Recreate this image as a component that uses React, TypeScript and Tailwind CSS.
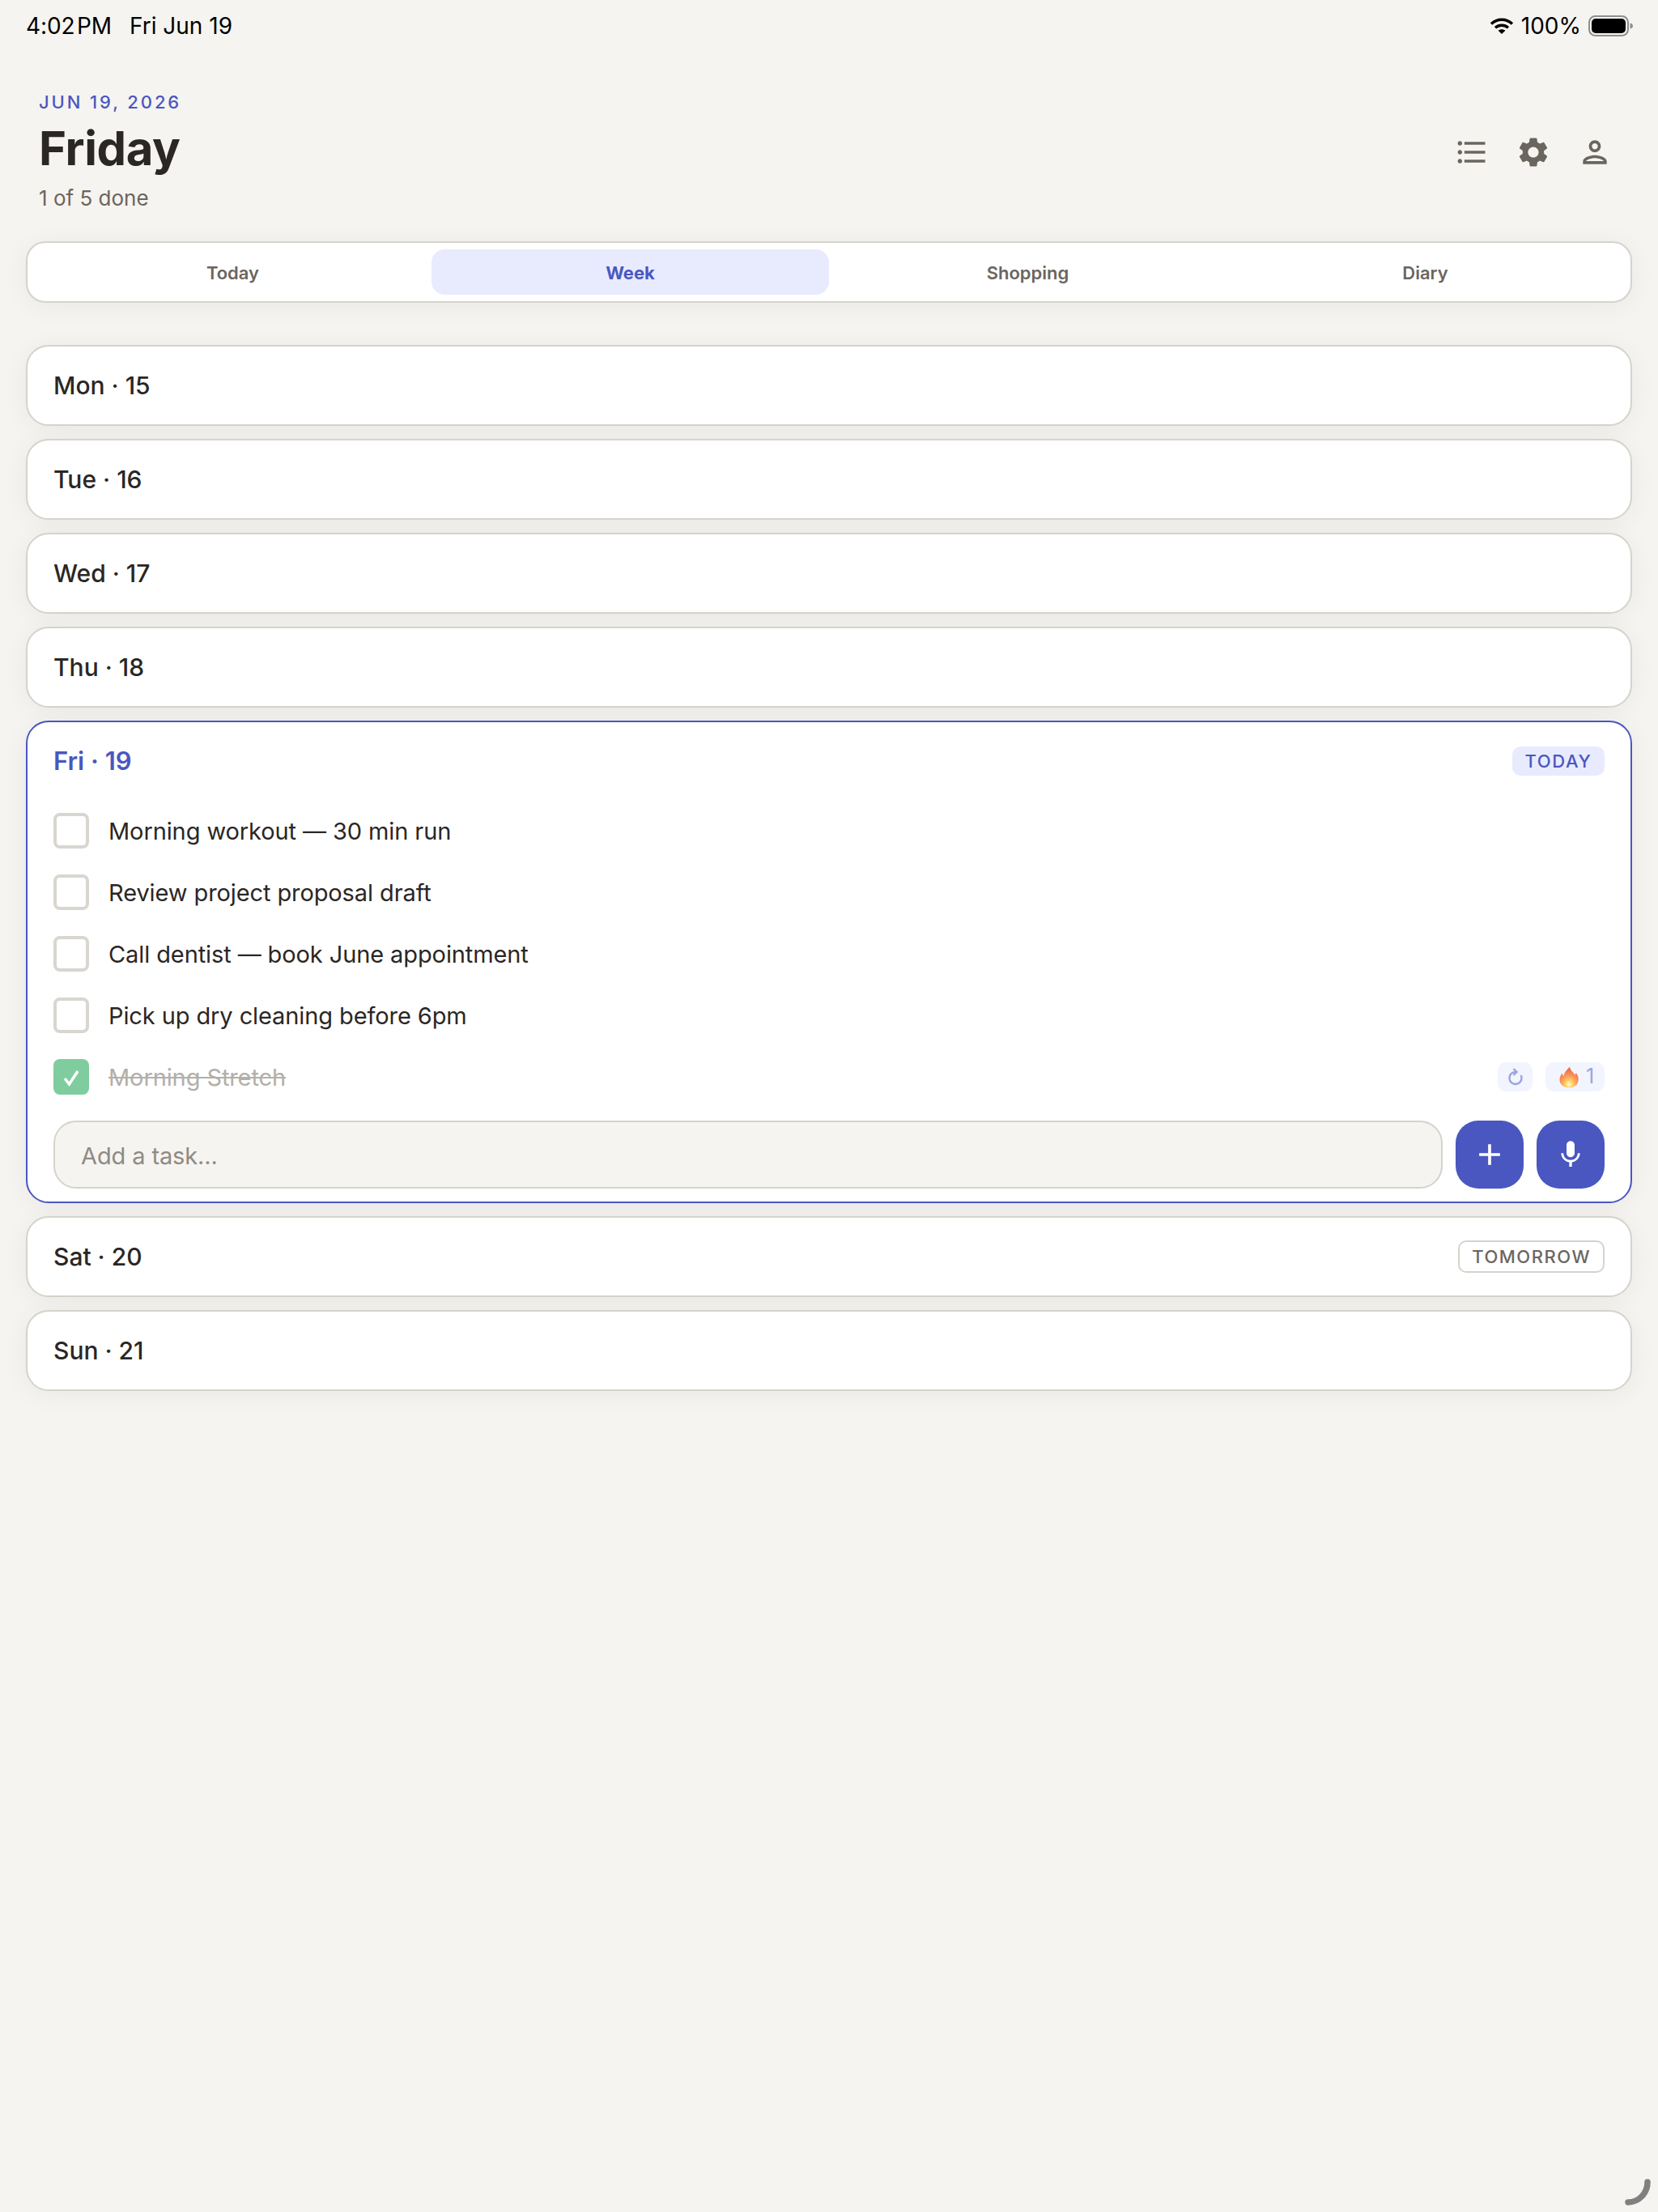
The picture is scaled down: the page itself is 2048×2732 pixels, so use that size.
import { MdAdd, MdFormatListBulleted, MdMic, MdOutlinePerson, MdSettings } from "react-icons/md";

const TABS = ["Today", "Week", "Shopping", "Diary"];

const TASKS = [
  "Morning workout — 30 min run",
  "Review project proposal draft",
  "Call dentist — book June appointment",
  "Pick up dry cleaning before 6pm",
];

const Wifi = () => (
  <svg width="30" height="22" viewBox="0 0 30 22" fill="none" stroke="#000" strokeWidth="3.4">
    <path d="M2 8.5C9.5 1.5 20.5 1.5 28 8.5" />
    <path d="M7 13.2C11.5 9.2 18.5 9.2 23 13.2" />
    <path d="M15 21L10.6 16.8C13 14.8 17 14.8 19.4 16.8Z" fill="#000" stroke="none" />
  </svg>
);

const Battery = () => (
  <svg width="56" height="26" viewBox="0 0 56 26" fill="none">
    <rect x="1" y="1" width="48" height="24" rx="7.5" stroke="#8e8e8e" strokeWidth="2" />
    <rect x="4" y="4" width="42" height="18" rx="5" fill="#000" />
    <path d="M51.5 9.5C54 10 55 11.5 55 13C55 14.5 54 16 51.5 16.5Z" fill="#8e8e8e" />
  </svg>
);

const Flame = () => (
  <svg width="24" height="27" viewBox="0 0 24 27">
    <defs>
      <radialGradient id="flameFill" cx="50%" cy="84%" r="72%">
        <stop offset="0%" stopColor="#fffbe6" />
        <stop offset="24%" stopColor="#ffd66b" />
        <stop offset="58%" stopColor="#fb9a55" />
        <stop offset="100%" stopColor="#ef6a50" />
      </radialGradient>
    </defs>
    <path
      d="M13 0.5C13.6 5 17 7 19.5 10.5C20.2 9.8 20.6 9 20.8 8C23 11 24 14 23.6 17.2C23 22.8 18.2 26.5 12 26.5C5.8 26.5 0.8 22.6 0.5 17C0.3 13.5 2 10.6 3.8 8.6C4 10 4.6 11.2 5.6 12C6 7.5 9.5 4.5 13 0.5Z"
      fill="url(#flameFill)"
    />
  </svg>
);

const RepeatIcon = () => (
  <svg width="20" height="22" viewBox="0 0 20 22" fill="none" stroke="#9aa4e0" strokeWidth="2.4">
    <path d="M10 5C5.6 5 2.5 8.3 2.5 12.5C2.5 16.8 5.8 20 10 20C14.2 20 17.5 16.8 17.5 12.5C17.5 11.2 17.2 10 16.6 9" />
    <path d="M7.5 1L11.5 5L7.5 9" />
  </svg>
);

const DayRow = ({ label, badge }: { label: string; badge?: string }) => (
  <div className="flex h-[100px] items-center justify-between rounded-[28px] border-2 border-[#d6d3cc] bg-white px-8 shadow-[0_4px_32px_rgba(0,0,0,0.05)]">
    <span className="text-[30px] font-[550] text-[#2a2724]">{label}</span>
    {badge && (
      <span className="flex h-10 items-center rounded-[10px] border-2 border-[#d6d3cc] px-[15px] text-[22px] font-medium tracking-[1.5px] text-[#6b6560]">
        {badge}
      </span>
    )}
  </div>
);

const App = () => {
  return (
    <div className="relative h-[2732px] overflow-hidden bg-[#f5f4f0] font-['Inter','Noto_Sans',sans-serif]">
      {/* Status bar */}
      <div className="flex h-16 items-center justify-between pl-8 pr-[30px] text-[28px] text-black">
        <div className="flex gap-[22px]">
          <span className="tracking-[-0.1px]">4:02{"\u200a"}PM</span>
          <span>Fri Jun 19</span>
        </div>
        <div className="flex items-center gap-[9px]">
          <Wifi />
          <span>100%</span>
          <Battery />
        </div>
      </div>

      {/* Header */}
      <header className="mb-[35px] mt-12 flex items-center justify-between pl-12 pr-10">
        <div>
          <p className="text-[22px] font-medium leading-7 tracking-[2.9px] text-[#4a57c0]">JUN 19, 2026</p>
          <h1 className="mt-[9px] text-[58px] font-bold leading-[68px] tracking-[-0.4px] text-[#2a2724]">Friday</h1>
          <p className="mt-[10px] text-[26px] leading-9 text-[#6b6560]">1 of 5 done</p>
        </div>
        <div className="flex text-[#6b6560]">
          <button className="flex w-[76px] justify-center"><MdFormatListBulleted size={44} /></button>
          <button className="flex w-[76px] justify-center"><MdSettings size={44} /></button>
          <button className="flex w-[76px] justify-center"><MdOutlinePerson size={44} /></button>
        </div>
      </header>

      <main className="px-8">
        {/* Tabs */}
        <nav className="mb-[52px] grid grid-cols-4 rounded-[24px] border-2 border-[#d6d3cc] bg-white p-2 shadow-[0_4px_32px_rgba(0,0,0,0.05)]">
          {TABS.map((tab) => (
            <button
              key={tab}
              className={
                tab === "Week"
                  ? "h-14 rounded-[16px] bg-[#e8ebfd] pt-0.5 text-[22px] font-bold text-[#4a57c0]"
                  : "h-14 rounded-[16px] pt-0.5 text-[22px] font-semibold text-[#6b6560]"
              }
            >
              {tab}
            </button>
          ))}
        </nav>

        {/* Week */}
        <section className="flex flex-col gap-4">
          <DayRow label="Mon · 15" />
          <DayRow label="Tue · 16" />
          <DayRow label="Wed · 17" />
          <DayRow label="Thu · 18" />

          <div className="rounded-[28px] border-2 border-[#4a57c0] bg-white px-8 pb-4 shadow-[0_4px_32px_rgba(0,0,0,0.05)]">
            <div className="flex h-24 items-center justify-between">
              <span className="text-[31px] font-semibold text-[#4a57c0]">Fri · 19</span>
              <span className="flex h-9 w-[114px] items-center justify-center rounded-[10px] bg-[#e8ebfd] text-[22px] font-medium tracking-[1.6px] text-[#4a57c0]">
                TODAY
              </span>
            </div>

            {TASKS.map((task) => (
              <div key={task} className="flex h-[76px] items-center gap-6">
                <span className="h-11 w-11 rounded-[8px] border-4 border-[#d9d6d0] bg-white" />
                <span className="pt-0.5 text-[29px] tracking-[-0.1px] text-[#2a2724]">{task}</span>
              </div>
            ))}

            <div className="flex h-[76px] items-center gap-6">
              <span className="flex h-11 w-11 items-center justify-center rounded-[8px] bg-[#7fcd9e]">
                <svg width="24" height="24" viewBox="0 0 24 24" fill="none" stroke="#fff" strokeWidth="3.5">
                  <path d="M4 14L9.5 21L20 5" />
                </svg>
              </span>
              <span className="flex-1 pt-0.5 text-[29px] tracking-[-0.1px] text-[#b3afa9] line-through">Morning Stretch</span>
              <span className="flex h-9 w-[43px] items-center justify-center rounded-[10px] bg-[#f2f4fe]">
                <RepeatIcon />
              </span>
              <span className="-ml-2 flex h-9 w-[73px] items-center gap-[9px] rounded-[10px] bg-[#f2f4fe] pl-[17px] text-[25px] text-[#9aa4e0]">
                <Flame />
                <span>1</span>
              </span>
            </div>

            <div className="mt-4 flex gap-4">
              <input
                placeholder="Add a task..."
                className="h-[84px] min-w-0 flex-1 rounded-[28px] border-2 border-[#d6d3cc] bg-[#f5f4f0] px-8 pt-[3px] text-[29px] tracking-[-0.12px] text-[#2a2724] outline-none placeholder:text-[#8f8a84]"
              />
              <button className="flex h-[84px] w-[84px] items-center justify-center rounded-[28px] bg-[#4a57c0] text-white">
                <MdAdd size={44} />
              </button>
              <button className="flex h-[84px] w-[84px] items-center justify-center rounded-[28px] bg-[#4a57c0] text-white">
                <MdMic size={40} />
              </button>
            </div>
          </div>

          <DayRow label="Sat · 20" badge="TOMORROW" />
          <DayRow label="Sun · 21" />
        </section>
      </main>

      {/* Pencil corner hint */}
      <svg className="absolute bottom-0 right-0" width="48" height="48" viewBox="0 0 48 48" fill="none">
        <path d="M35 11A24.5 24.5 0 0 1 11 36" stroke="#808080" strokeWidth="7.5" strokeLinecap="round" />
      </svg>
    </div>
  );
};

export default App;
